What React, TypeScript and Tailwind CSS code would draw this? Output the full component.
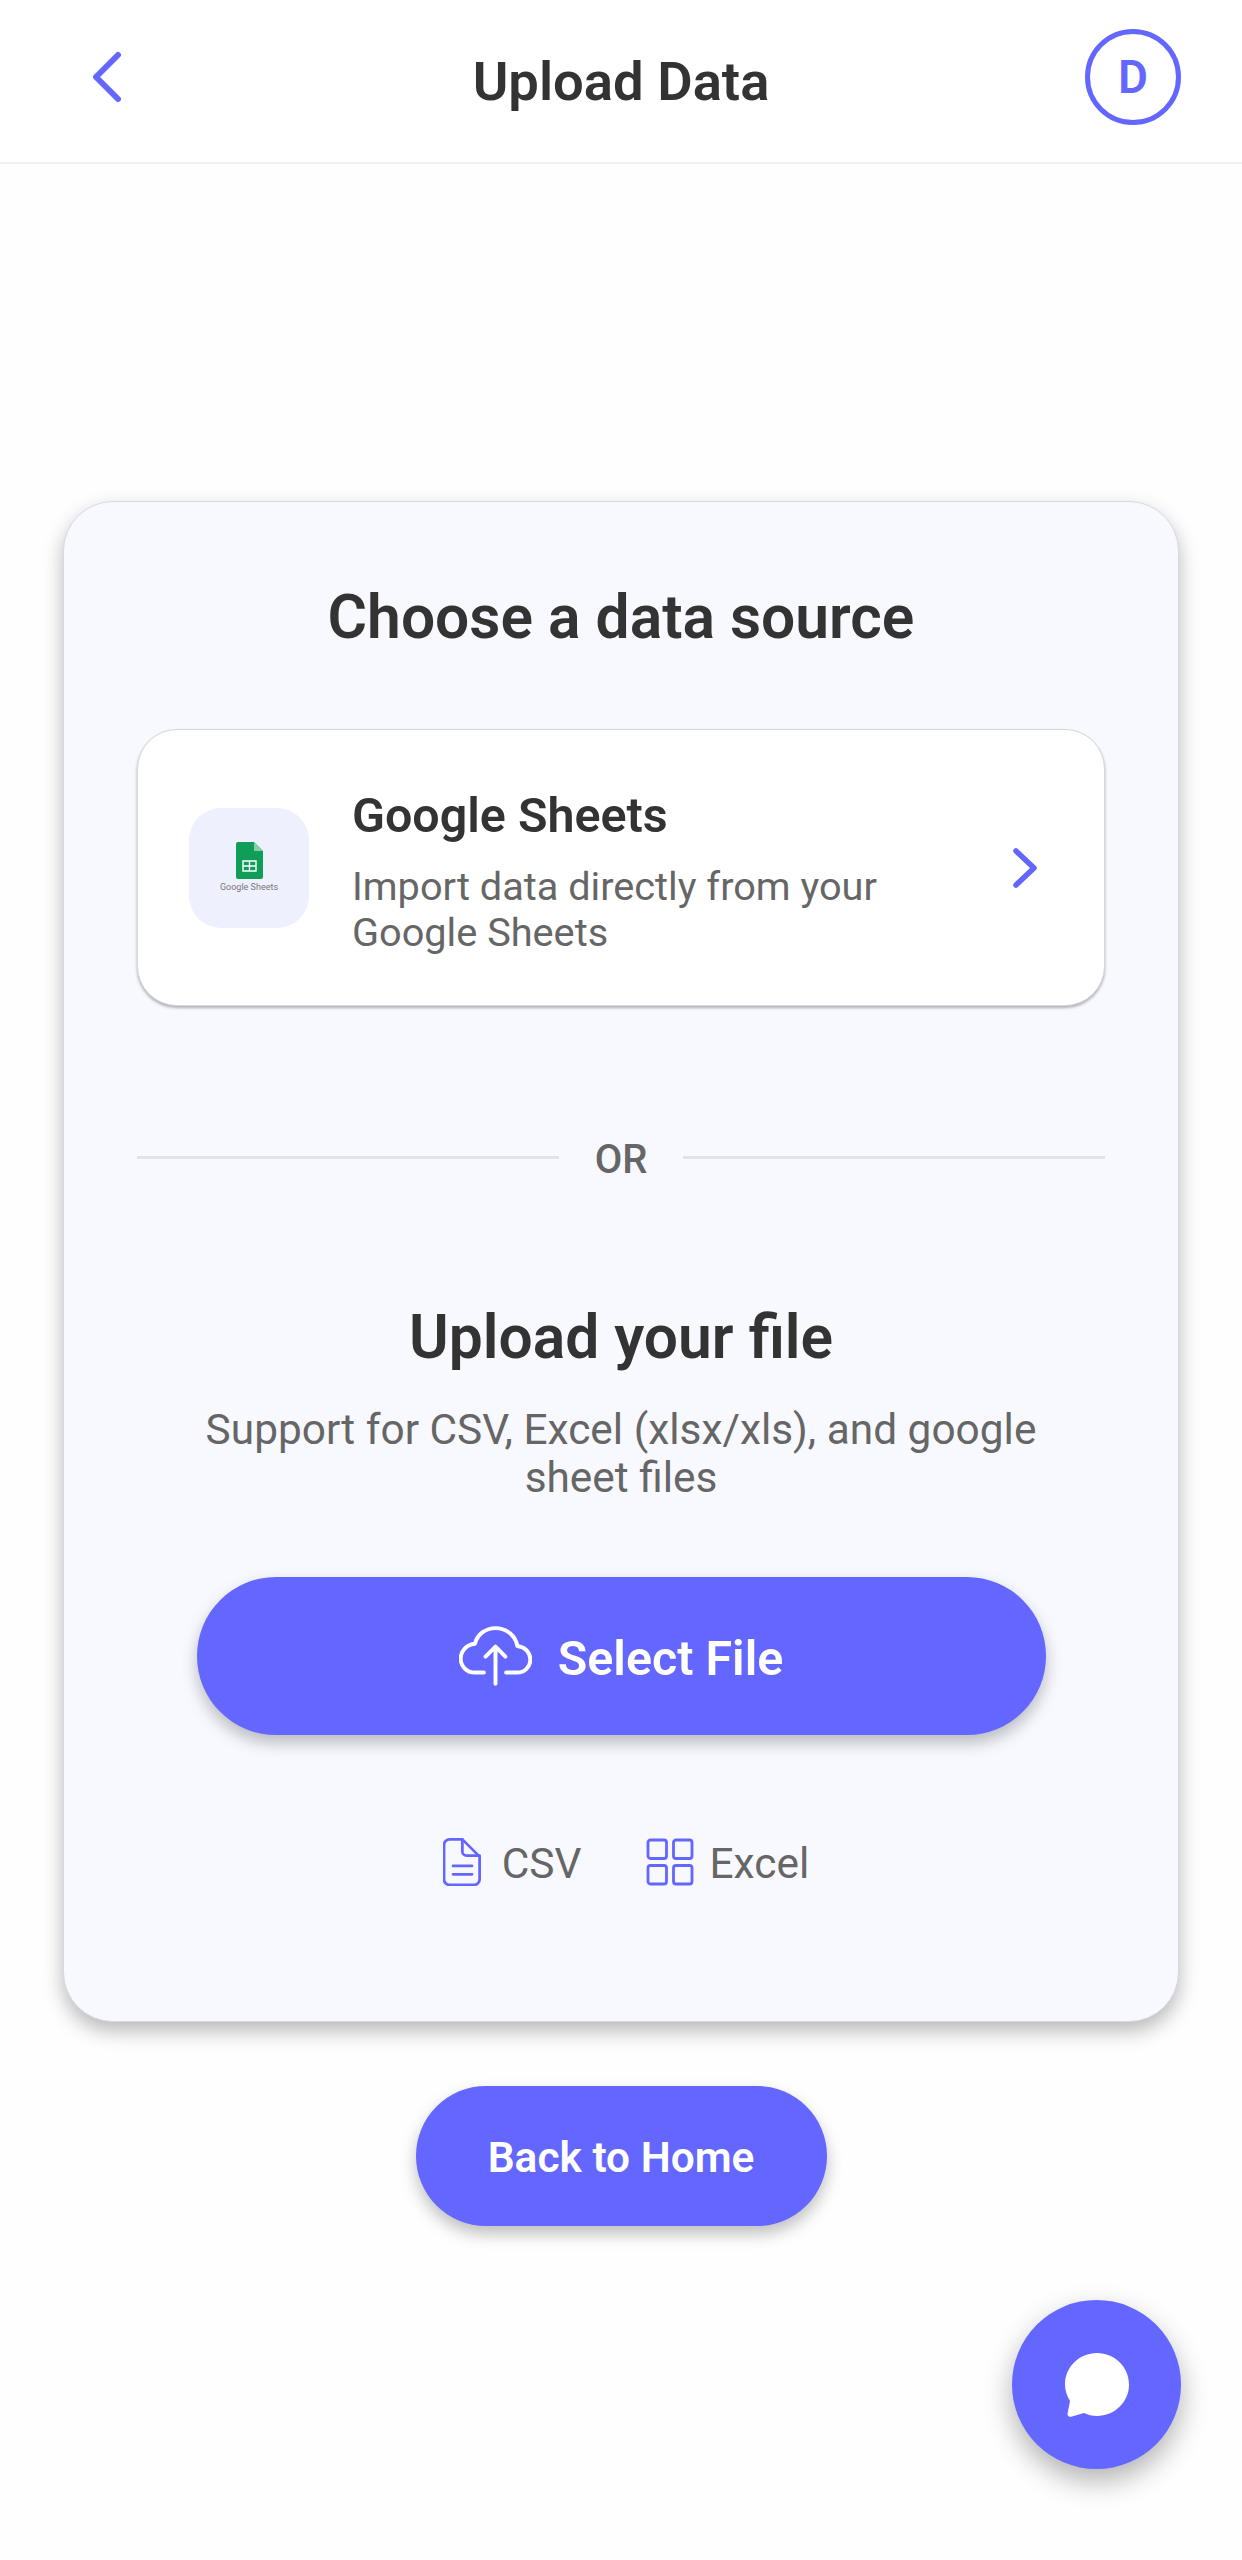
export default function App() {
  return (
    <div className="relative min-h-[2560px] w-[1242px] bg-[#fefefe] font-['Roboto',sans-serif] text-[#333333]">
      <header className="flex h-[164px] items-center border-b-2 border-[#f0f0f0] bg-white pb-[8px] pl-[61px] pr-[61px]">
        <div className="flex-1">
          <svg className="ml-[30px] h-[52px] w-[32px]" viewBox="0 0 32 52" fill="none" stroke="#6366ff" strokeWidth="6" strokeLinecap="round" strokeLinejoin="round">
            <path d="M27 4 L5 26 L27 48" />
          </svg>
        </div>
        <h1 className="mt-[9px] text-[54.4px] font-semibold leading-[64px]">Upload Data</h1>
        <div className="flex flex-1 justify-end">
          <div className="flex h-[96px] w-[96px] items-center justify-center rounded-full border-[5px] border-[#6366ff] text-[46px] font-semibold text-[#6366ff]">D</div>
        </div>
      </header>

      <main className="flex flex-col items-center pt-[337px]">
        <section className="flex w-[1116px] flex-col items-center rounded-[50px] border border-[#d8d8e6] bg-[#f8f9ff] px-[73px] pb-[135px] pt-[81px] shadow-[0_9px_20px_rgba(0,0,0,0.28)]">
          <h2 className="text-[60.5px] font-semibold leading-[70px]">Choose a data source</h2>

          <div className="mt-[76px] flex h-[277px] w-full items-center rounded-[40px] border border-[#d8d8d8] bg-white pl-[51px] pr-[66px] shadow-[0_2px_3px_rgba(0,0,0,0.3)]">
            <div className="flex h-[120px] w-[120px] shrink-0 flex-col items-center justify-center rounded-[32px] bg-[#eff0fe]">
              <svg className="h-[37px] w-[27px]" viewBox="0 0 27 37">
                <path d="M2 0 H18 L27 9 V35 a2 2 0 0 1 -2 2 H2 a2 2 0 0 1 -2 -2 V2 a2 2 0 0 1 2 -2 Z" fill="#0f9d58" />
                <path d="M18 0 L27 9 H18 Z" fill="#87ceab" />
                <path d="M7 19 H20 V29 H7 Z M7 24 H20 M13.5 19 V29" fill="none" stroke="#ffffff" strokeWidth="1.4" />
              </svg>
              <span className="mt-[2px] whitespace-nowrap text-[9px] leading-[12px] text-[#777777]">Google Sheets</span>
            </div>
            <div className="ml-[43px] flex-1 pt-[6px]">
              <div className="translate-y-[2px] text-[48.4px] font-semibold leading-[56px]">Google Sheets</div>
              <div className="mt-[22px] w-[560px] text-[39.7px] leading-[46px] text-[#666666]">Import data directly from your Google Sheets</div>
            </div>
            <svg className="h-[42px] w-[26px]" viewBox="0 0 26 42" fill="none" stroke="#6366ff" strokeWidth="5.5" strokeLinecap="round" strokeLinejoin="round">
              <path d="M4 4 L22 21 L4 38" />
            </svg>
          </div>

          <div className="mt-[128px] flex h-[46px] w-full items-center gap-[36px]">
            <div className="h-[3px] flex-1 bg-[#e2e3ea]" />
            <span className="translate-y-[3px] text-[40px] font-medium leading-[46px] text-[#666666]">OR</span>
            <div className="h-[3px] flex-1 bg-[#e2e3ea]" />
          </div>

          <h2 className="mt-[123px] text-[60.5px] font-semibold leading-[70px]">Upload your file</h2>
          <p className="mt-[33px] w-[860px] text-center text-[42.4px] leading-[48px] text-[#666666]">Support for CSV, Excel (xlsx/xls), and google sheet files</p>

          <button className="mt-[75px] flex h-[158px] w-[849px] items-center justify-center gap-[26px] rounded-full bg-[#6366ff] text-[48.4px] font-semibold text-white shadow-[0_8px_16px_rgba(0,0,0,0.25)]">
            <svg className="h-[60px] w-[73px]" viewBox="120 80 220 180" fill="none" stroke="#ffffff" strokeWidth="12" strokeLinecap="round" strokeLinejoin="round">
              <path d="M195 220 H168 C142 220 125 200 125 178 C125 155 143 135 168 133 C175 105 200 86 230 86 C265 86 290 110 296 140 C320 143 335 160 335 180 C335 203 317 220 295 220 H262" />
              <path d="M230 254 V145 M200 172 L230 142 L260 172" />
            </svg>
            <span className="translate-y-[3px]">Select File</span>
          </button>

          <div className="mt-[103px] flex h-[48px] items-center pl-[10px] text-[42.4px] leading-[48px] text-[#666666]">
            <svg className="h-[48px] w-[38px]" viewBox="74 716 110 139" fill="none" stroke="#6366ff" strokeWidth="8" strokeLinecap="round" strokeLinejoin="round">
              <path d="M95 720 H130 L180 770 V836 a16 16 0 0 1 -16 16 H93 a16 16 0 0 1 -16 -16 V736 a16 16 0 0 1 16 -16 Z" />
              <path d="M130 720 V755 a12 12 0 0 0 12 12 H180" />
              <path d="M103 797 H158 M103 821 H158" />
            </svg>
            <span className="ml-[21px] translate-y-[2px]">CSV</span>
            <svg className="ml-[64px] h-[48px] w-[48px]" viewBox="0 0 48 48" fill="none" stroke="#6366ff" strokeWidth="2.8" strokeLinejoin="round">
              <rect x="2" y="2" width="18.5" height="18.5" rx="2.5" />
              <rect x="27.5" y="2" width="18.5" height="18.5" rx="2.5" />
              <rect x="2" y="27.5" width="18.5" height="18.5" rx="2.5" />
              <rect x="27.5" y="27.5" width="18.5" height="18.5" rx="2.5" />
            </svg>
            <span className="ml-[16px] translate-y-[2px]">Excel</span>
          </div>
        </section>

        <button className="mt-[64px] flex h-[140px] w-[411px] items-center justify-center rounded-full bg-[#6366ff] text-[42.4px] font-semibold text-white shadow-[0_8px_16px_rgba(0,0,0,0.25)]">
          <span className="translate-y-[2px]">Back to Home</span>
        </button>
      </main>

      <button className="absolute left-[1012px] top-[2300px] flex h-[169px] w-[169px] items-center justify-center rounded-full bg-[#6366ff] shadow-[0_12px_28px_rgba(0,0,0,0.3)]">
        <svg className="h-[64px] w-[64px]" viewBox="0 0 64 64" fill="#ffffff">
          <path d="M32 0C49.7 0 64 14 64 31.5S49.7 63 32 63c-5 0-9-1-13-3l-12 3.6c-3 .8-5-1-4.3-3.8L5 48C2 43 0 37.5 0 31.5 0 14 14.3 0 32 0Z" />
        </svg>
      </button>
    </div>
  );
}
